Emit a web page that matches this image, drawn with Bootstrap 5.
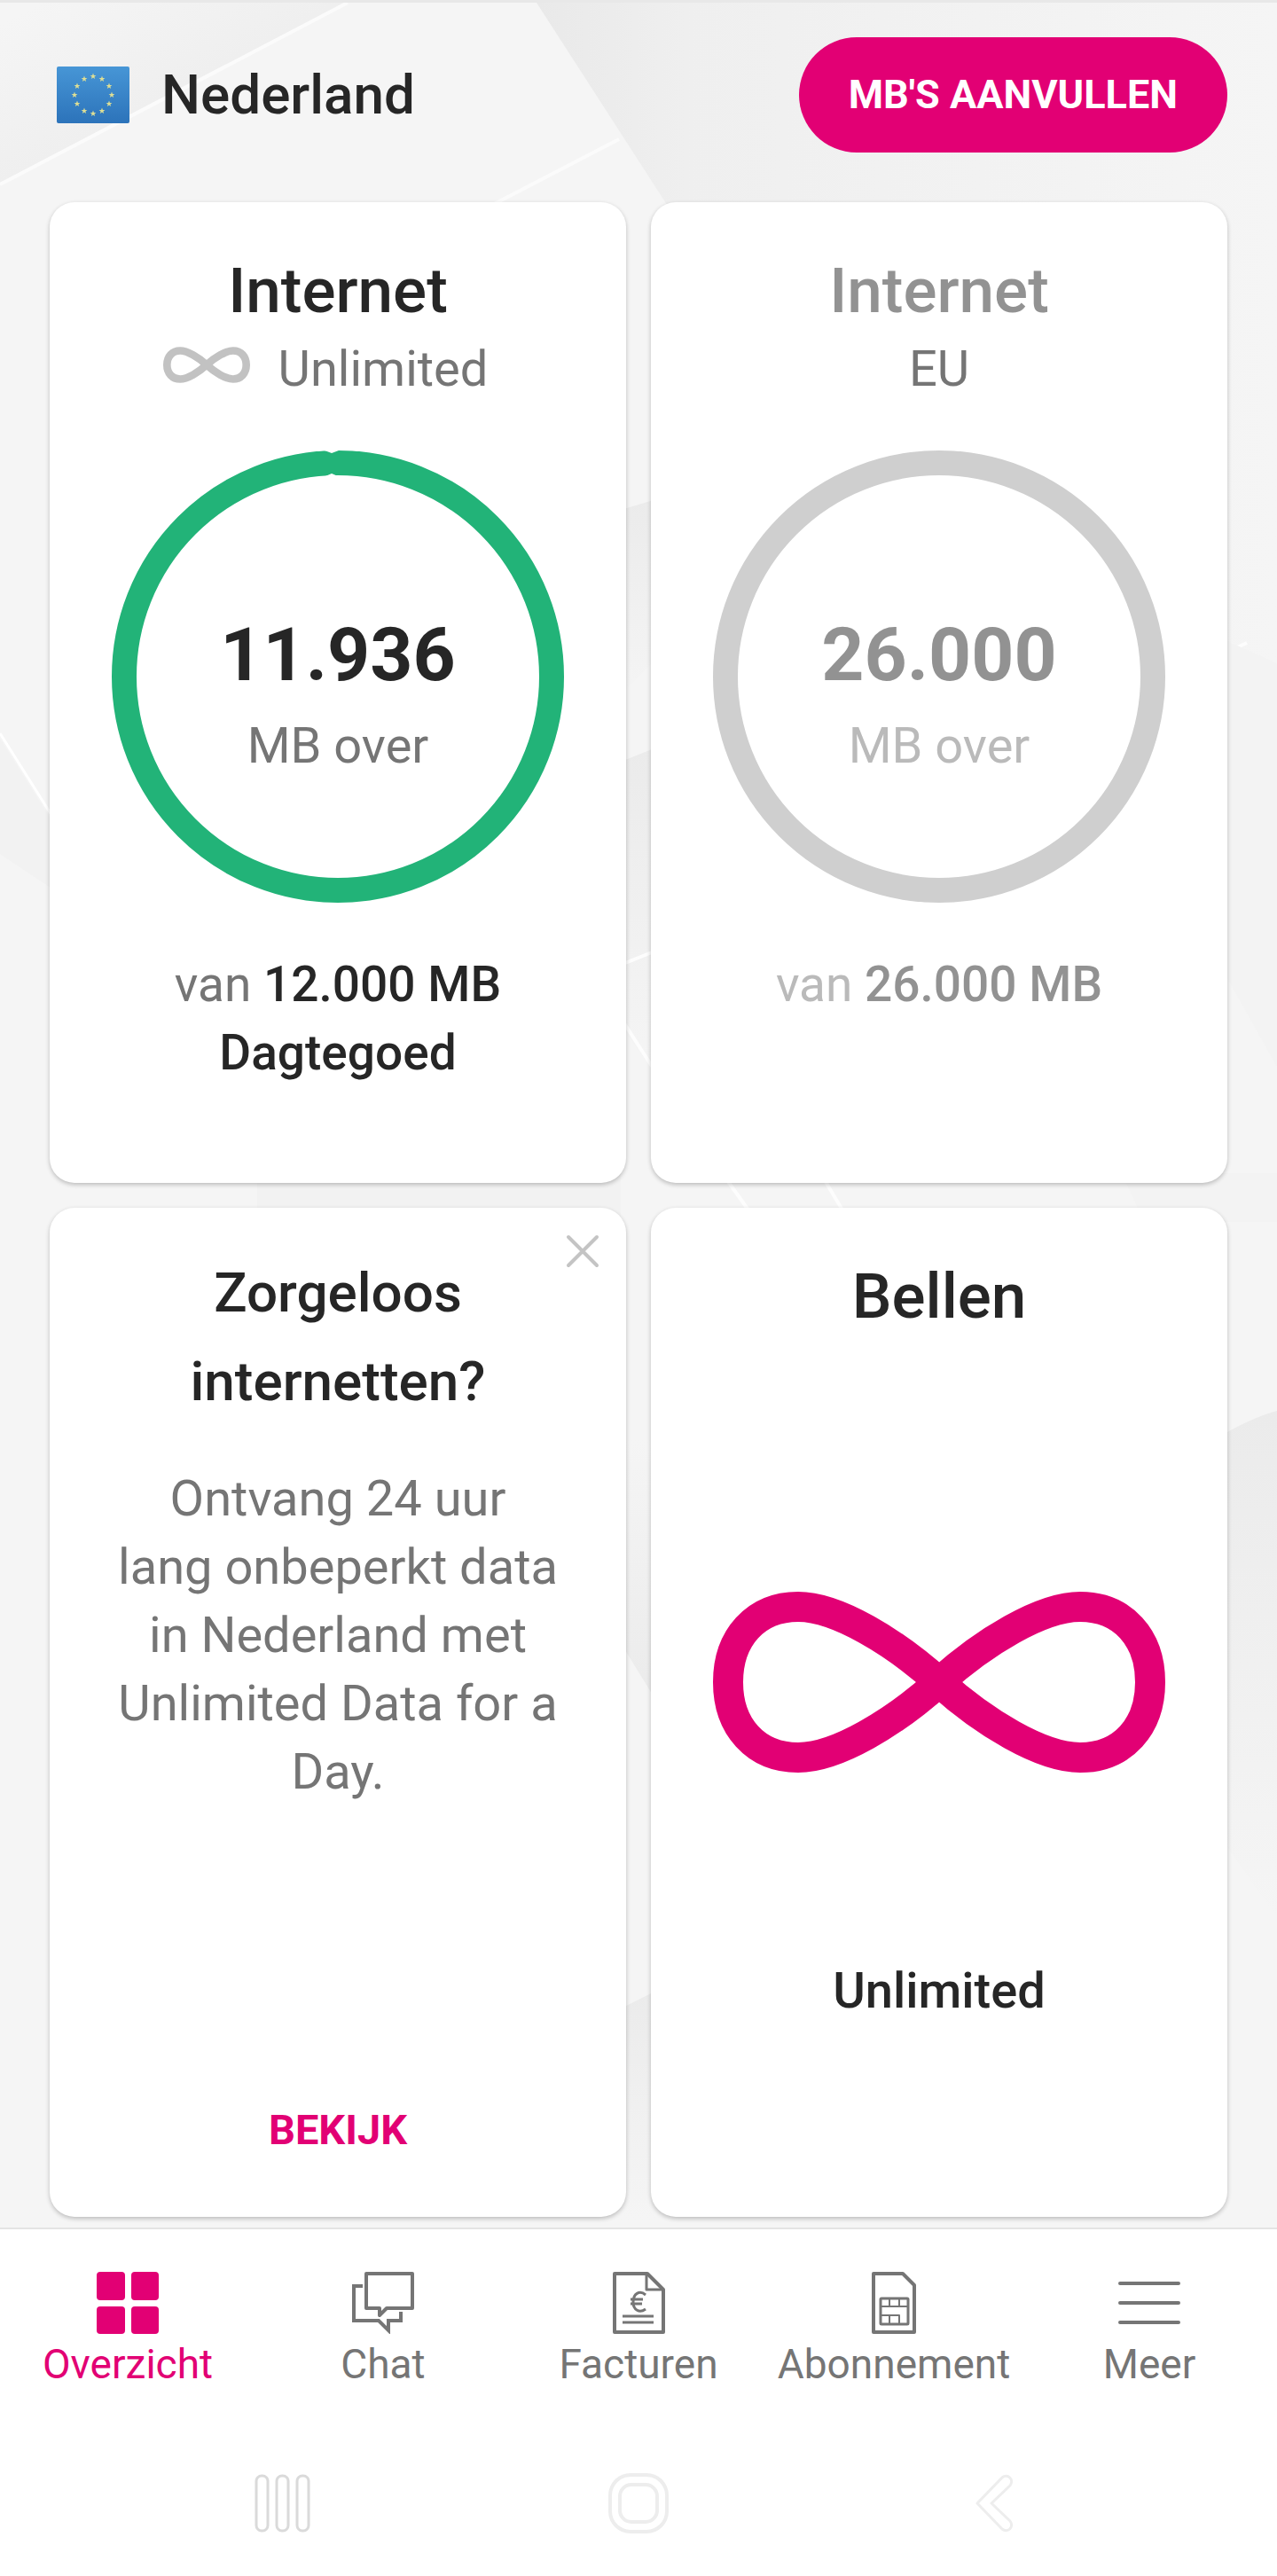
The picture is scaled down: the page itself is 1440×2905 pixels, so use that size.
<!DOCTYPE html>
<html lang="nl">
<head>
<meta charset="utf-8">
<meta name="viewport" content="width=device-width, initial-scale=1">
<title>Overzicht</title>
<link href="https://cdn.jsdelivr.net/npm/bootstrap@5.3.0/dist/css/bootstrap.min.css" rel="stylesheet">
<style>
  :root { --magenta: #e20074; --ink: #262626; --soft: #757575; }
  body { font-family: Roboto, "Liberation Sans", sans-serif; background: #f5f5f5; color: var(--ink); font-size: 56px; line-height: 77px; }
  .app { border-top: 3px solid #e8e8e8; isolation: isolate; }
  .backdrop { z-index: -1; }
  .topbar { padding: 39px 56px 56px 64px; }
  .flag { width: 82px; height: 64px; }
  .country { font-size: 62px; font-weight: 500; line-height: 84px; gap: 36px; }
  .btn-topup { --bs-btn-bg: var(--magenta); --bs-btn-color: #fff; --bs-btn-hover-bg: #c00063; --bs-btn-hover-color: #fff; --bs-btn-border-width: 0; font-size: 45px; font-weight: 700; line-height: 130px; padding: 0 56px; }
  .tiles { padding: 0 56px 12px; }
  .tile-row { --bs-gutter-x: 28px; --bs-gutter-y: 28px; }
  .tile { --bs-card-border-width: 0; --bs-card-border-radius: 28px; --bs-card-bg: #fff; --bs-card-color: var(--ink); box-shadow: 0 2px 5px rgba(0,0,0,.24); }
  .tile-usage { min-height: 1106px; padding: 58px 32px 32px; }
  .tile-promo { min-height: 1138px; padding: 46px 32px 68px; }
  .tile-call { min-height: 1138px; padding: 58px 32px 32px; }
  .tile-title { font-size: 71px; line-height: 84px; font-weight: 500; margin: 0 0 8px; }
  .promo-title { font-size: 62px; line-height: 100px; font-weight: 500; margin: 0 0 44px; }
  .soft { color: var(--soft); }
  .strong { font-weight: 500; }
  .unlimited-row { gap: 32px; padding-right: 28px; }
  .unlimited-row svg { margin-bottom: 10px; }
  .ring { width: 510px; height: 510px; margin: 53px 0 54px; }
  .ring-text { inset: 0; padding-top: 44px; gap: 16px; }
  .ring-value { font-size: 84px; line-height: 96px; font-weight: 700; color: var(--ink); }
  .total { font-size: 55px; }
  .faded .tile-title, .faded .ring-value, .faded .strong { color: #929292; }
  .faded .ring-text, .faded .total { color: #bababa; }
  .call-art { width: 510px; height: 204px; margin: 283px 0 208px; }
  .close-x { top: 29px; right: 29px; line-height: 0; }
  .link-cta { color: var(--magenta); font-size: 47px; line-height: 60px; font-weight: 700; }
  .tabs { border-top: 2px solid #e4e4e4; font-size: 46px; line-height: 60px; padding-top: 48px; }
  .tabs a { color: var(--soft); gap: 4px; }
  .tabs a.active { color: var(--magenta); }
  .tab-icon { width: 70px; height: 70px; }
  .sysbar { padding: 93px 118px 48px; }
  .sysbar button { line-height: 0; }
</style>
<script src="https://cdn.jsdelivr.net/npm/bootstrap@5.3.0/dist/js/bootstrap.bundle.min.js" defer></script>
</head>
<body>
<div class="app position-relative">
  <svg class="backdrop position-absolute top-0 start-0 w-100 h-100" viewBox="0 0 1440 2902" preserveAspectRatio="none" aria-hidden="true">
    <defs>
      <linearGradient id="fadeRight" x1="0" x2="1" y1="0" y2="0"><stop offset="0" stop-color="#e9e9e9"/><stop offset=".2" stop-color="#efefef"/><stop offset="1" stop-color="#f5f5f5"/></linearGradient>
      <linearGradient id="fadeUp" gradientUnits="userSpaceOnUse" x1="195" y1="100" x2="120" y2="-40"><stop offset="0" stop-color="#efefef"/><stop offset="1" stop-color="#f5f5f5"/></linearGradient>
      <linearGradient id="fadeDown" x1="0" x2="0" y1="0" y2="1"><stop offset="0" stop-color="#ebebeb"/><stop offset="1" stop-color="#f5f5f5"/></linearGradient>
      <linearGradient id="fadeIn" x1="0" x2="0" y1="0" y2="1"><stop offset="0" stop-color="#f5f5f5"/><stop offset="1" stop-color="#ebebeb"/></linearGradient>
    </defs>
    <path d="M0 0H390L0 204Z" fill="url(#fadeUp)"/>
    <path d="M605 0H1440V1000L1250 1000Z" fill="url(#fadeRight)"/>
    <path d="M392 0L0 205M698 154L540 236" stroke="#fbfbfb" stroke-width="4"/>
    <path d="M690 575L740 560V740L690 790Z" fill="url(#fadeDown)"/>
    <path d="M690 860L740 840V1210L690 1140Z" fill="url(#fadeDown)"/>
    <path d="M0 824L70 935" stroke="#fff" stroke-width="3"/>
    <path d="M0 830L60 925V1000L0 960Z" fill="#f2f2f2"/>
    <path d="M700 1085L740 1069M700 1145L740 1207M820 1328L850 1370M930 1328L955 1370M1384 732L1406 722" stroke="#fdfdfd" stroke-width="4"/>
    <path d="M290 1320H700V1375H290Z" fill="#f2f2f2"/>
    <path d="M1265 1320H1440V1375H1290Z" fill="#f3f3f3"/>
    <path d="M1384 720L1440 745V1200L1384 1100Z" fill="#f3f3f3"/>
    <path d="M1370 1620Q1410 1596 1440 1588V2160L1370 2060Z" fill="url(#fadeDown)"/>
    <path d="M700 1620H740V1915L700 1850Z" fill="url(#fadeIn)"/>
    <path d="M700 2262L740 2242V2500H700Z" fill="url(#fadeDown)"/>
  </svg>

  <header class="topbar d-flex align-items-center justify-content-between">
    <div class="country d-flex align-items-center">
      <svg class="flag" viewBox="0 0 82 64" role="img" aria-label="Europese Unie">
        <defs>
          <linearGradient id="blue" x1="0" x2="0" y1="0" y2="1"><stop offset="0" stop-color="#4796d6"/><stop offset="1" stop-color="#2c73ba"/></linearGradient>
          <path id="star" d="M0-3.6L.9-1.1 3.4-1.1 1.4.5 2.1 3 0 1.5-2.1 3-1.4.5-3.4-1.1-.9-1.1Z" fill="#dfdf94"/>
        </defs>
        <rect width="82" height="64" rx="2" fill="url(#blue)"/>
        <use href="#star" x="41" y="11"/><use href="#star" x="51" y="14"/><use href="#star" x="59" y="22"/><use href="#star" x="62" y="32"/><use href="#star" x="59" y="42"/><use href="#star" x="51" y="50"/><use href="#star" x="41" y="53"/><use href="#star" x="31" y="50"/><use href="#star" x="23" y="42"/><use href="#star" x="20" y="32"/><use href="#star" x="23" y="22"/><use href="#star" x="31" y="14"/>
      </svg>
      <span>Nederland</span>
    </div>
    <button type="button" class="btn btn-topup rounded-pill">MB'S AANVULLEN</button>
  </header>

  <main class="tiles">
    <div class="row tile-row">
      <div class="col-6">
        <section class="card tile tile-usage align-items-center text-center">
          <h2 class="tile-title">Internet</h2>
          <div class="unlimited-row soft d-flex align-items-center">
            <svg width="98" height="41" viewBox="-6 -6 522 216" fill="none" stroke="#c2c2c2" stroke-width="46" aria-hidden="true"><path d="M255 102C205 57 140 17 96 17 48 17 17 52 17 102S48 187 96 187C140 187 205 147 255 102S370 17 414 17C462 17 493 52 493 102S462 187 414 187C370 187 305 147 255 102Z"/></svg>
            <span>Unlimited</span>
          </div>
          <div class="ring position-relative">
            <svg class="d-block" viewBox="0 0 510 510" fill="none" aria-hidden="true"><circle cx="255" cy="255" r="241" stroke="#22b378" stroke-width="28"/><path d="M240 0L248 3 256 0ZM241 29L248 26 255 29Z" fill="#fff"/></svg>
            <div class="ring-text position-absolute d-flex flex-column justify-content-center soft">
              <div class="ring-value">11.936</div>
              <div>MB over</div>
            </div>
          </div>
          <div class="total"><span class="soft">van</span> <span class="strong">12.000 MB</span><br><span class="strong">Dagtegoed</span></div>
        </section>
      </div>
      <div class="col-6">
        <section class="card tile tile-usage faded align-items-center text-center">
          <h2 class="tile-title">Internet</h2>
          <div class="soft">EU</div>
          <div class="ring position-relative">
            <svg class="d-block" viewBox="0 0 510 510" fill="none" stroke="#cfcfcf" stroke-width="28" aria-hidden="true"><circle cx="255" cy="255" r="241"/></svg>
            <div class="ring-text position-absolute d-flex flex-column justify-content-center">
              <div class="ring-value">26.000</div>
              <div>MB over</div>
            </div>
          </div>
          <div class="total">van <span class="strong">26.000 MB</span></div>
        </section>
      </div>
      <div class="col-6">
        <section class="card tile tile-promo align-items-center text-center">
          <button type="button" class="close-x btn border-0 p-0 position-absolute" aria-label="Sluiten">
            <svg width="40" height="40" viewBox="0 0 40 40" stroke="#c4c4c4" stroke-width="4" stroke-linecap="round" aria-hidden="true"><path d="M4 4L36 36M36 4L4 36"/></svg>
          </button>
          <h2 class="promo-title">Zorgeloos<br>internetten?</h2>
          <p class="soft m-0">Ontvang 24 uur<br>lang onbeperkt data<br>in Nederland met<br>Unlimited Data for a<br>Day.</p>
          <a class="link-cta text-decoration-none mt-auto" href="#">BEKIJK</a>
        </section>
      </div>
      <div class="col-6">
        <section class="card tile tile-call align-items-center text-center">
          <h2 class="tile-title">Bellen</h2>
          <svg class="call-art" viewBox="0 0 510 204" fill="none" stroke="#e20074" stroke-width="34" aria-hidden="true"><path d="M255 102C205 57 140 17 96 17 48 17 17 52 17 102S48 187 96 187C140 187 205 147 255 102S370 17 414 17C462 17 493 52 493 102S462 187 414 187C370 187 305 147 255 102Z"/></svg>
          <div class="strong">Unlimited</div>
        </section>
      </div>
    </div>
  </main>

  <footer class="bg-white">
    <nav class="tabs nav nav-fill flex-nowrap" aria-label="Hoofdmenu">
      <a class="active d-flex flex-column align-items-center text-decoration-none col" href="#">
        <svg class="tab-icon" viewBox="0 0 70 70" fill="currentColor" aria-hidden="true"><rect width="32" height="32" rx="4"/><rect x="39" width="31" height="32" rx="4"/><rect y="39" width="32" height="31" rx="4"/><rect x="39" y="39" width="31" height="31" rx="4"/></svg>
        <span>Overzicht</span>
      </a>
      <a class="d-flex flex-column align-items-center text-decoration-none col" href="#">
        <svg class="tab-icon" viewBox="0 0 70 70" fill="none" stroke="currentColor" stroke-width="4" aria-hidden="true"><path d="M16 2H68V41H39L31 49V41H16Z" stroke-linejoin="round"/><path d="M12 16H2V55H30L41 66V55H55V45"/></svg>
        <span>Chat</span>
      </a>
      <a class="d-flex flex-column align-items-center text-decoration-none col" href="#">
        <svg class="tab-icon" viewBox="0 0 70 70" fill="none" stroke="currentColor" stroke-width="4" stroke-linejoin="round" aria-hidden="true"><path d="M8 2H45L63 20V68H8Z"/><path d="M44 3V20H62" stroke-width="3"/><path d="M17 50H52M17 57H52" stroke-width="3"/><path d="M43 26C36 20 29 25 29 34S36 47 43 42M26 31H40M26 36H39" stroke-width="3" stroke-linejoin="miter"/></svg>
        <span>Facturen</span>
      </a>
      <a class="d-flex flex-column align-items-center text-decoration-none col" href="#">
        <svg class="tab-icon" viewBox="0 0 70 70" fill="none" stroke="currentColor" stroke-width="4" stroke-linejoin="round" aria-hidden="true"><path d="M12 2H45L58 15V68H12Z"/><rect x="20" y="30" width="31" height="29" rx="1" stroke-width="3"/><path d="M20 39H51M30 30V39M41 30V39M20 49H41V59M30 49V59" stroke-width="2"/></svg>
        <span>Abonnement</span>
      </a>
      <a class="d-flex flex-column align-items-center text-decoration-none col" href="#">
        <svg class="tab-icon" viewBox="0 0 70 70" fill="none" stroke="currentColor" stroke-width="4" stroke-linecap="round" aria-hidden="true"><path d="M2 13H68M2 35H68M2 57H68"/></svg>
        <span>Meer</span>
      </a>
    </nav>
    <div class="sysbar d-flex">
      <button type="button" class="btn border-0 p-0 col" aria-label="Recente apps"><svg width="68" height="68" viewBox="0 0 68 68" fill="none" stroke="#dadada" stroke-width="3" aria-hidden="true"><rect x="4" y="3" width="13" height="62" rx="6"/><rect x="27" y="3" width="13" height="62" rx="6"/><rect x="50" y="3" width="13" height="62" rx="6"/></svg></button>
      <button type="button" class="btn border-0 p-0 col" aria-label="Startscherm"><svg width="68" height="68" viewBox="0 0 68 68" fill="none" stroke="#ededed" stroke-width="4" aria-hidden="true"><rect x="2" y="2" width="64" height="64" rx="23"/><rect x="13" y="13" width="42" height="42" rx="13"/></svg></button>
      <button type="button" class="btn border-0 p-0 col" aria-label="Terug"><svg width="68" height="68" viewBox="0 0 68 68" fill="none" stroke="#ededed" stroke-width="3" stroke-linejoin="round" aria-hidden="true"><path d="M15 34L43 5C49 0 57 7 52 14L31 34L52 54C57 61 49 68 43 63Z"/></svg></button>
    </div>
  </footer>
</div>
</body>
</html>
